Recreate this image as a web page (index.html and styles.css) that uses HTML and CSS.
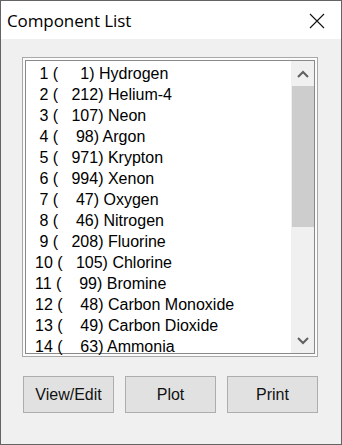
FILE: index.html
```html
<!DOCTYPE html>
<html>
<head>
<meta charset="utf-8">
<link rel="stylesheet" href="styles.css">
</head>
<body>
<div class="window">
  <div class="titlebar">
    <span class="title">Component List</span>
    <svg class="close" width="16" height="16" viewBox="0 0 16 16"><path d="M1 1 L15 15 M15 1 L1 15" stroke="#111" stroke-width="1.1" fill="none"/></svg>
  </div>
  <div class="content">
    <div class="frame">
      <div class="listbox">
        <div class="items">
          <div class="row"> 1 (     1) Hydrogen</div>
          <div class="row"> 2 (   212) Helium-4</div>
          <div class="row"> 3 (   107) Neon</div>
          <div class="row"> 4 (    98) Argon</div>
          <div class="row"> 5 (   971) Krypton</div>
          <div class="row"> 6 (   994) Xenon</div>
          <div class="row"> 7 (    47) Oxygen</div>
          <div class="row"> 8 (    46) Nitrogen</div>
          <div class="row"> 9 (   208) Fluorine</div>
          <div class="row">10 (   105) Chlorine</div>
          <div class="row">11 (    99) Bromine</div>
          <div class="row">12 (    48) Carbon Monoxide</div>
          <div class="row">13 (    49) Carbon Dioxide</div>
          <div class="row last">14 (    63) Ammonia</div>
        </div>
        <div class="scrollbar">
          <div class="arrow">
            <svg width="12" height="8" viewBox="0 0 12 8"><path d="M1 7 L6 2 L11 7" stroke="#606060" stroke-width="2" fill="none"/></svg>
          </div>
          <div class="track"><div class="thumb"></div></div>
          <div class="arrow">
            <svg width="12" height="8" viewBox="0 0 12 8"><path d="M1 1 L6 6 L11 1" stroke="#606060" stroke-width="2" fill="none"/></svg>
          </div>
        </div>
      </div>
    </div>
    <div class="buttons">
      <button class="btn">View/Edit</button>
      <button class="btn">Plot</button>
      <button class="btn">Print</button>
    </div>
  </div>
</div>
</body>
</html>
```

FILE: styles.css
```css
html, body {
  margin: 0;
  padding: 0;
  background: #f0f0f0;
}
.window {
  width: 342px;
  height: 445px;
  box-sizing: border-box;
  border: 1px solid #646464;
  background: #f0f0f0;
  display: flex;
  flex-direction: column;
}
.titlebar {
  height: 38px;
  background: #ffffff;
  display: flex;
  align-items: center;
  justify-content: space-between;
  padding: 0 16px 0 6px;
  flex: none;
}
.title {
  font-family: "Open Sans", "Noto Sans", sans-serif;
  font-size: 17px;
  color: #000;
  letter-spacing: -0.1px;
}
.close {
  display: block;
  margin-top: 1px;
}
.content {
  flex: 1;
  padding: 18px 0 0 21px;
}
.frame {
  width: 296px;
  height: 300px;
  box-sizing: border-box;
  border: 1px solid #a9a9a9;
  padding: 2px;
  background: #fbfbfb;
}
.listbox {
  height: 100%;
  box-sizing: border-box;
  border: 1px solid #8a8a8a;
  background: #fff;
  display: flex;
}
.items {
  flex: 1;
  padding: 2px 0 0 9px;
}
.row {
  white-space: pre;
  font-family: "Liberation Sans", Arial, sans-serif;
  font-size: 16px;
  line-height: 21px;
  color: #000;
}
.row.last {
  line-height: 17px;
  padding-top: 2px;
}
.scrollbar {
  width: 23px;
  flex: none;
  background: #f0f0f0;
  display: flex;
  flex-direction: column;
}
.arrow {
  height: 25px;
  display: flex;
  align-items: center;
  justify-content: center;
  flex: none;
}
.track {
  flex: 1;
}
.thumb {
  height: 141px;
  background: #cdcdcd;
  margin: 0 0 0 1px;
}
.buttons {
  display: flex;
  gap: 11px;
  margin-top: 19px;
  padding-left: 1px;
}
.btn {
  width: 91px;
  height: 37px;
  box-sizing: border-box;
  border: 1px solid #adadad;
  background: #e1e1e1;
  font-family: "Liberation Sans", Arial, sans-serif;
  font-size: 16px;
  color: #111;
  padding: 0;
  margin: 0;
}
```
